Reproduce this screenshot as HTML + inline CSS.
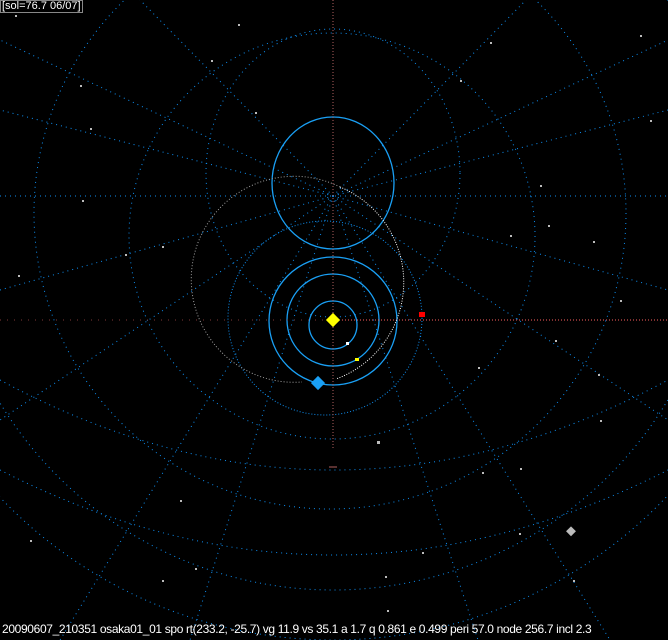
<!DOCTYPE html>
<html><head><meta charset="utf-8"><style>
html,body{margin:0;padding:0;background:#000;width:668px;height:640px;overflow:hidden}
svg{position:absolute;left:0;top:0}
.t{position:absolute;color:#fff;font-family:"Liberation Sans","IPAGothic",sans-serif;font-size:12px;line-height:13px;white-space:nowrap}
</style></head><body>
<svg width="668" height="640" viewBox="0 0 668 640">
<g fill="none" stroke="#0e8ef0" stroke-width="1" stroke-dasharray="1 4">
<ellipse cx="333" cy="173" rx="127" ry="144"/>
<circle cx="332" cy="236" r="203"/>
<circle cx="330" cy="213" r="296"/>
<circle cx="333" cy="200" r="390"/>
<circle cx="333" cy="180" r="460"/>
<line x1="0" y1="196" x2="668" y2="196"/>
<circle cx="325" cy="318" r="97" stroke-dasharray="1 2"/>
<path d="M333 196 L0 40 M333 196 L0 110 M333 196 L0 290 M333 196 L0 420 M333 196 L60 640 M333 196 L190 640 M333 196 L478 640 M333 196 L610 640 M333 196 L668 420 M333 196 L668 290 M333 196 L668 110 M333 196 L668 40 M333 196 L140 0 M333 196 L526 0"/>
<path d="M0 380 Q333 560 668 380 M0 470 Q333 640 668 470"/>
</g>
<g fill="none" stroke="#1aa0f5" stroke-width="1.3">
<ellipse cx="333" cy="183" rx="61" ry="66"/>
<circle cx="333" cy="325" r="24"/>
<circle cx="333" cy="320" r="46"/>
<circle cx="333" cy="321" r="64"/>
</g>
<g fill="none" stroke-dasharray="1 2">
<line x1="333" y1="0" x2="333" y2="450" stroke="#b06060"/>
<line x1="0" y1="320" x2="333" y2="320" stroke="#803838" stroke-dasharray="1 6"/>
<line x1="333" y1="320" x2="668" y2="320" stroke="#ff6060"/>
<path d="M340 187 A103 103 0 1 0 302 382" stroke="#a0a0a0"/>
<path d="M340 187 A103 103 0 0 1 336 379" stroke="#fff" stroke-dasharray="1 1.5"/>
</g>
<g>
<rect x="328" y="315" width="10" height="10" fill="#ffff00" transform="rotate(45 333 320)"/>
<rect x="313" y="378" width="10" height="10" fill="#1aa0f5" transform="rotate(45 318 383)"/>
<rect x="419" y="312" width="6" height="5" fill="#ff0000"/>
<rect x="346" y="342" width="3" height="3" fill="#fff"/>
<rect x="355" y="358" width="4" height="3" fill="#ffff00"/>
<rect x="567" y="528" width="7" height="7" fill="#bbb" transform="rotate(45 571 532)"/>
<line x1="329" y1="467" x2="337" y2="467" stroke="#b06060"/>
</g>
<g fill="#bbb">
<rect x="255" y="112" width="2" height="2"/><rect x="211" y="60" width="2" height="2"/><rect x="80" y="85" width="2" height="2"/>
<rect x="90" y="128" width="2" height="2"/><rect x="82" y="200" width="2" height="2"/><rect x="125" y="254" width="2" height="2"/>
<rect x="162" y="246" width="2" height="2"/><rect x="18" y="275" width="2" height="2"/><rect x="490" y="42" width="2" height="2"/>
<rect x="540" y="185" width="2" height="2"/><rect x="548" y="225" width="2" height="2"/><rect x="510" y="235" width="2" height="2"/>
<rect x="593" y="241" width="2" height="2"/><rect x="478" y="367" width="2" height="2"/><rect x="598" y="374" width="2" height="2"/>
<rect x="377" y="441" width="3" height="3"/><rect x="520" y="468" width="2" height="2"/><rect x="482" y="472" width="2" height="2"/>
<rect x="195" y="568" width="2" height="2"/><rect x="162" y="580" width="2" height="2"/><rect x="385" y="576" width="2" height="2"/>
<rect x="422" y="552" width="2" height="2"/><rect x="519" y="533" width="2" height="2"/><rect x="573" y="580" width="2" height="2"/>
<rect x="387" y="610" width="2" height="2"/><rect x="238" y="24" width="2" height="2"/><rect x="640" y="35" width="2" height="2"/>
<rect x="650" y="120" width="2" height="2"/><rect x="15" y="15" width="2" height="2"/><rect x="460" y="80" width="2" height="2"/>
<rect x="555" y="340" width="2" height="2"/><rect x="620" y="300" width="2" height="2"/><rect x="30" y="540" width="2" height="2"/>
<rect x="600" y="420" width="2" height="2"/><rect x="180" y="500" width="2" height="2"/>
</g>
</svg>
<div class="t" style="left:0;top:0;border:1px solid #888;padding:0 1px;font-size:11px;line-height:11px">[sol=76.7 06/07]</div>
<div class="t" style="left:2px;top:623px;letter-spacing:-0.35px">20090607_210351 osaka01_01 spo rt(233.2, -25.7) vg 11.9 vs 35.1 a 1.7 q 0.861 e 0.499 peri 57.0 node 256.7 incl 2.3</div>
</body></html>
